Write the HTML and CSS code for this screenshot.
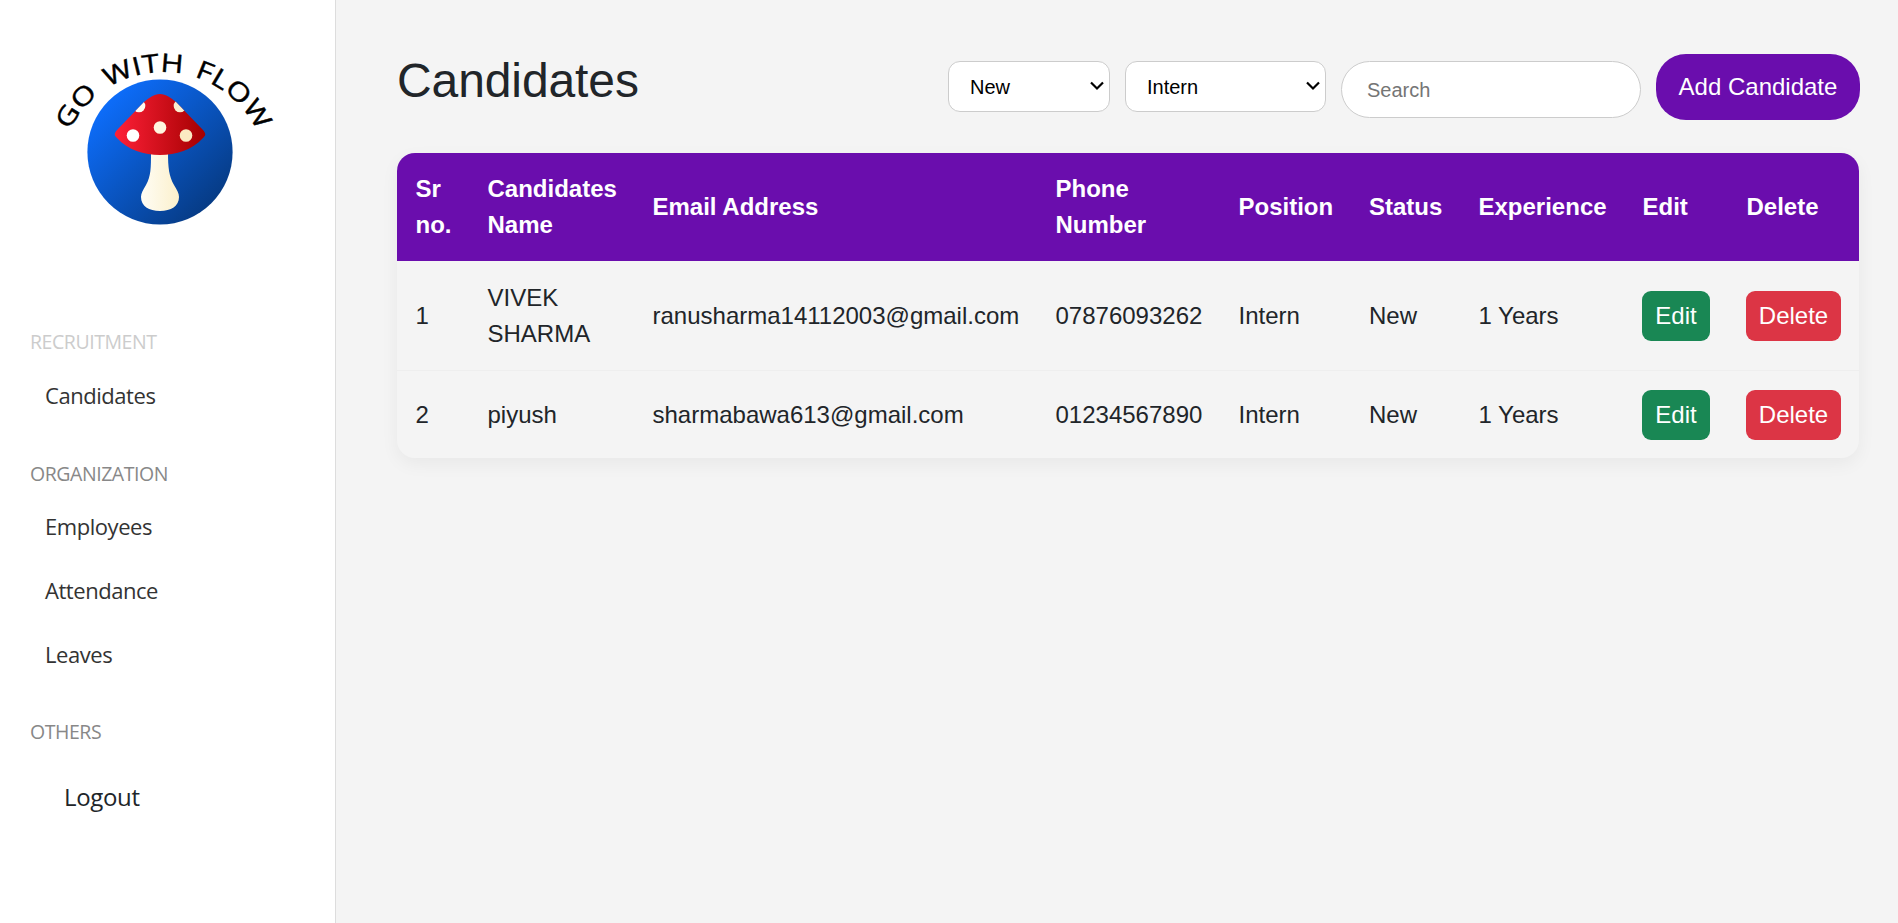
FILE: index.html
```html
<!DOCTYPE html>
<html lang="en">
<head>
<meta charset="utf-8">
<title>Candidates</title>
<link rel="stylesheet" href="styles.css">
</head>
<body>
<div class="app">
  <aside class="sidebar">
    <svg class="logo" viewBox="0 0 240 200" width="240" height="200" role="img">
      <defs>
        <linearGradient id="disc" x1="0.1" y1="0.15" x2="0.85" y2="0.9"><stop offset="0" stop-color="#0d6efd"/><stop offset="1" stop-color="#063a82"/></linearGradient>
        <linearGradient id="cap" x1="0" x2="1"><stop offset="0" stop-color="#ff2038"/><stop offset="1" stop-color="#a30000"/></linearGradient>
        <linearGradient id="stem" x1="0" x2="1"><stop offset="0" stop-color="#fffdf5"/><stop offset="1" stop-color="#fbf0cc"/></linearGradient>
        <clipPath id="capClip"><path d="M120 54c6 0 11 4 16 8l27 28c3 4 3 5 0 8-11 12-27 17-43 17s-32-5-43-17c-3-3-3-4 0-8l27-28c5-4 10-8 16-8z"/></clipPath>
        <path id="arc" d="M29.5 90.5A104.3 104.3 0 0 1 217.5 92"/>
      </defs>
      <circle cx="120" cy="112" r="72.6" fill="url(#disc)"/>
      <path fill="url(#stem)" d="M111 112h17c0 16 1 24 6 33 3 5 5 8 5 12 0 9-8 14-19 14s-19-5-19-14c0-4 2-7 5-12 5-9 5-17 5-33z"/>
      <g clip-path="url(#capClip)">
        <rect x="74" y="53" width="92" height="63" fill="url(#cap)"/>
        <circle cx="99" cy="66" r="6.3" fill="#fffaf0"/>
        <circle cx="140" cy="66" r="6.3" fill="#fbefd0"/>
        <circle cx="93" cy="95.5" r="6.3" fill="#fff"/>
        <circle cx="120" cy="87.5" r="6.3" fill="#fff6df"/>
        <circle cx="146" cy="95.5" r="6.3" fill="#fbeac2"/>
      </g>
      <text class="logo-text"><textPath href="#arc" textLength="233" lengthAdjust="spacingAndGlyphs">GO WITH FLOW</textPath></text>
    </svg>
    <nav class="nav">
      <section class="group">
        <h2 class="group-title muted">RECRUITMENT</h2>
        <a class="link">Candidates</a>
      </section>
      <section class="group">
        <h2 class="group-title">ORGANIZATION</h2>
        <a class="link">Employees</a>
        <a class="link">Attendance</a>
        <a class="link">Leaves</a>
      </section>
      <section class="group">
        <h2 class="group-title">OTHERS</h2>
        <a class="logout">Logout</a>
      </section>
    </nav>
  </aside>
  <main class="main">
    <header class="toolbar">
      <h1 class="title">Candidates</h1>
      <div class="controls">
        <div class="picker status">
          <select class="select"><option>New</option></select>
          <svg class="chevron" width="14" height="10" viewBox="0 0 14 10"><path d="M1 1.5l6 6 6-6" fill="none" stroke="#000" stroke-width="2.2"/></svg>
        </div>
        <div class="picker role">
          <select class="select"><option>Intern</option></select>
          <svg class="chevron" width="14" height="10" viewBox="0 0 14 10"><path d="M1 1.5l6 6 6-6" fill="none" stroke="#000" stroke-width="2.2"/></svg>
        </div>
        <input class="search" type="text" placeholder="Search">
        <button class="add">Add Candidate</button>
      </div>
    </header>
    <table class="table">
      <colgroup><col class="c1"><col class="c2"><col class="c3"><col class="c4"><col class="c5"><col class="c6"><col class="c7"><col class="c8"><col class="c9"></colgroup>
      <thead>
        <tr><th>Sr no.</th><th>Candidates Name</th><th>Email Address</th><th>Phone Number</th><th>Position</th><th>Status</th><th>Experience</th><th>Edit</th><th>Delete</th></tr>
      </thead>
      <tbody>
        <tr><td>1</td><td>VIVEK SHARMA</td><td>ranusharma14112003@gmail.com</td><td>07876093262</td><td>Intern</td><td>New</td><td>1 Years</td><td><button class="btn edit">Edit</button></td><td><button class="btn delete">Delete</button></td></tr>
        <tr><td>2</td><td>piyush</td><td>sharmabawa613@gmail.com</td><td>01234567890</td><td>Intern</td><td>New</td><td>1 Years</td><td><button class="btn edit">Edit</button></td><td><button class="btn delete">Delete</button></td></tr>
      </tbody>
    </table>
  </main>
</div>
</body>
</html>
```
FILE: styles.css
```css
* { box-sizing: border-box; }
body { margin: 0; background: #f4f4f4; color: #212529; font: 24px/36px "Liberation Sans", Arial, sans-serif; }
h1, h2 { margin: 0; font-weight: 400; }
button, select, input { font-family: inherit; margin: 0; }
.app { display: flex; height: 923px; overflow: hidden; }

.sidebar { width: 336px; flex: none; background: #fff; border-right: 1px solid #ddd; padding-top: 40px; font-family: "Open Sans", sans-serif; }
.logo { display: block; margin-left: 40px; overflow: visible; }
.logo-text { font: 25.5px "Open Sans", sans-serif; word-spacing: 3px; fill: #000; stroke: #000; stroke-width: .4px; }
.nav { padding: 87px 30px 0; }
.group { display: flex; flex-direction: column; align-items: flex-start; margin-bottom: 24px; }
.group-title { font-size: 19.5px; line-height: 30px; letter-spacing: -.45px; color: #888; white-space: nowrap; margin-bottom: 14px; }
.group-title.muted { color: #ccc; }
.link { font-size: 22px; line-height: 32px; letter-spacing: -.45px; padding: 8px 0 8px 15px; margin-bottom: 16px; color: #333; white-space: nowrap; }
.group:nth-child(2) .group-title { margin-bottom: 13px; }
.group:nth-child(2) { margin-bottom: 23px; }
.logout { font-size: 24px; line-height: 36px; letter-spacing: -.35px; padding: 18px 0 0 34px; color: #212529; }

.main { flex: 1; padding: 53px 38px 0 61px; }
.toolbar { display: flex; justify-content: space-between; height: 100px; }
.title { font-size: 48px; line-height: 56px; letter-spacing: -.1px; }
.controls { display: flex; align-items: flex-start; gap: 15px; padding-top: 1px; }
.picker { position: relative; height: 51px; margin-top: 7px; }
.status { width: 162px; }
.role { width: 201px; }
.select { appearance: none; width: 100%; height: 100%; padding: 0 21px; font-size: 20px; color: #000; background: #fff; border: 1px solid #ccc; border-radius: 12px; }
.chevron { position: absolute; right: 6px; top: 20px; pointer-events: none; }
.search { width: 300px; height: 57px; margin-top: 7px; padding: 2px 25px 0; font-size: 20px; background: #fff; border: 1px solid #ccc; border-radius: 30px; }
.search::placeholder { color: #757575; }
.add { width: 204px; height: 66px; padding: 0; font-size: 24px; color: #fff; background: #6a0dad; border: 0; border-radius: 30px; }

.table { width: 1462px; table-layout: fixed; border-collapse: separate; border-spacing: 0; border-radius: 18px; overflow: hidden; box-shadow: 0 6px 18px rgba(0, 0, 0, .05); background: #f4f4f4; }
.table th, .table td { padding: 18px 16px 18px 18.5px; text-align: left; vertical-align: middle; }
.table th { color: #fff; background: #6a0dad; font-weight: 700; }
.table td { border-bottom: 1px solid #eee; height: 110px; padding-top: 19px; }
.table tr:last-child td { border-bottom: 0; height: 87px; padding-top: 18px; }
.c1 { width: 72px; }
.c2 { width: 165px; }
.c3 { width: 403px; }
.c4 { width: 183px; }
.c5 { width: 130.5px; }
.c6 { width: 109.5px; }
.c7 { width: 164px; }
.c8 { width: 104px; }
.c9 { width: 131px; }
.btn { display: block; height: 50px; padding: 0; margin-left: -.5px; font-size: 24px; color: #fff; border: 0; border-radius: 9px; }
.edit { width: 68px; background: #198754; }
.delete { width: 95px; background: #dc3545; }
```
